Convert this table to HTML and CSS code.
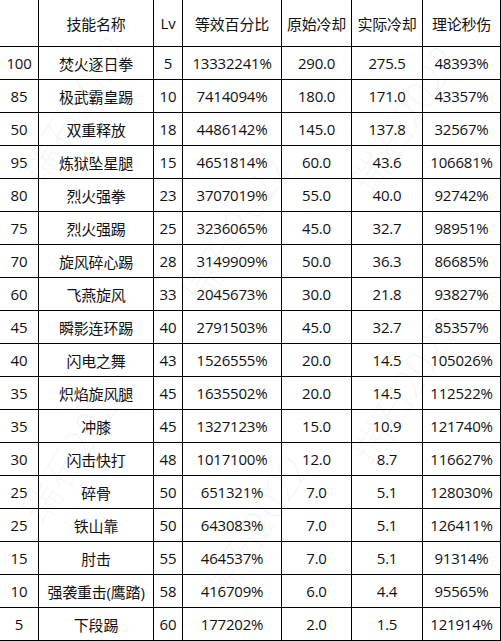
FILE: index.html
```html
<!DOCTYPE html>
<html lang="zh-CN">
<head>
<meta charset="utf-8">
<title>技能秒伤表</title>
<link rel="stylesheet" href="styles.css">
</head>
<body>
<div class="sheet">
  <div class="grid">
    <div class="cell head"></div><div class="cell head">技能名称</div><div class="cell head">Lv</div><div class="cell head">等效百分比</div><div class="cell head">原始冷却</div><div class="cell head">实际冷却</div><div class="cell head">理论秒伤</div>
    <div class="cell">100</div><div class="cell">焚火逐日拳</div><div class="cell">5</div><div class="cell">13332241%</div><div class="cell">290.0</div><div class="cell">275.5</div><div class="cell">48393%</div>
    <div class="cell">85</div><div class="cell">极武霸皇踢</div><div class="cell">10</div><div class="cell">7414094%</div><div class="cell">180.0</div><div class="cell">171.0</div><div class="cell">43357%</div>
    <div class="cell">50</div><div class="cell">双重释放</div><div class="cell">18</div><div class="cell">4486142%</div><div class="cell">145.0</div><div class="cell">137.8</div><div class="cell">32567%</div>
    <div class="cell">95</div><div class="cell">炼狱坠星腿</div><div class="cell">15</div><div class="cell">4651814%</div><div class="cell">60.0</div><div class="cell">43.6</div><div class="cell">106681%</div>
    <div class="cell">80</div><div class="cell">烈火强拳</div><div class="cell">23</div><div class="cell">3707019%</div><div class="cell">55.0</div><div class="cell">40.0</div><div class="cell">92742%</div>
    <div class="cell">75</div><div class="cell">烈火强踢</div><div class="cell">25</div><div class="cell">3236065%</div><div class="cell">45.0</div><div class="cell">32.7</div><div class="cell">98951%</div>
    <div class="cell">70</div><div class="cell">旋风碎心踢</div><div class="cell">28</div><div class="cell">3149909%</div><div class="cell">50.0</div><div class="cell">36.3</div><div class="cell">86685%</div>
    <div class="cell">60</div><div class="cell">飞燕旋风</div><div class="cell">33</div><div class="cell">2045673%</div><div class="cell">30.0</div><div class="cell">21.8</div><div class="cell">93827%</div>
    <div class="cell">45</div><div class="cell">瞬影连环踢</div><div class="cell">40</div><div class="cell">2791503%</div><div class="cell">45.0</div><div class="cell">32.7</div><div class="cell">85357%</div>
    <div class="cell">40</div><div class="cell">闪电之舞</div><div class="cell">43</div><div class="cell">1526555%</div><div class="cell">20.0</div><div class="cell">14.5</div><div class="cell">105026%</div>
    <div class="cell">35</div><div class="cell">炽焰旋风腿</div><div class="cell">45</div><div class="cell">1635502%</div><div class="cell">20.0</div><div class="cell">14.5</div><div class="cell">112522%</div>
    <div class="cell">35</div><div class="cell">冲膝</div><div class="cell">45</div><div class="cell">1327123%</div><div class="cell">15.0</div><div class="cell">10.9</div><div class="cell">121740%</div>
    <div class="cell">30</div><div class="cell">闪击快打</div><div class="cell">48</div><div class="cell">1017100%</div><div class="cell">12.0</div><div class="cell">8.7</div><div class="cell">116627%</div>
    <div class="cell">25</div><div class="cell">碎骨</div><div class="cell">50</div><div class="cell">651321%</div><div class="cell">7.0</div><div class="cell">5.1</div><div class="cell">128030%</div>
    <div class="cell">25</div><div class="cell">铁山靠</div><div class="cell">50</div><div class="cell">643083%</div><div class="cell">7.0</div><div class="cell">5.1</div><div class="cell">126411%</div>
    <div class="cell">15</div><div class="cell">肘击</div><div class="cell">55</div><div class="cell">464537%</div><div class="cell">7.0</div><div class="cell">5.1</div><div class="cell">91314%</div>
    <div class="cell">10</div><div class="cell">强袭重击(鹰踏)</div><div class="cell">58</div><div class="cell">416709%</div><div class="cell">6.0</div><div class="cell">4.4</div><div class="cell">95565%</div>
    <div class="cell">5</div><div class="cell">下段踢</div><div class="cell">60</div><div class="cell">177202%</div><div class="cell">2.0</div><div class="cell">1.5</div><div class="cell">121914%</div>
  </div>
  <div class="watermark">
    <span class="wm w1">瑞石2022</span>
    <span class="wm w2">瑞石2022</span>
    <span class="wm w3">瑞石2022</span>
    <span class="wm w4">瑞石2022</span>
    <span class="wm w5">瑞石2022</span>
    <span class="wm w6">瑞石2022</span>
  </div>
</div>
</body>
</html>
```
FILE: styles.css
```css
html, body {
  margin: 0;
  padding: 0;
  background: #fff;
}
body {
  width: 501px;
  height: 641px;
  overflow: hidden;
}
.sheet {
  position: relative;
  width: 501px;
  height: 641px;
}
.grid {
  display: grid;
  grid-template-columns: 38px 114px 28px 98px 69px 70px 77px;
  grid-template-rows: 46px repeat(18, 32px);
  gap: 1px;
  padding: 0 1px 1px 0;
  background: #000;
  width: max-content;
}
.cell {
  background: #fff;
  display: flex;
  align-items: center;
  justify-content: center;
  white-space: nowrap;
  font-family: "Open Sans", "Noto Sans CJK SC", sans-serif;
  font-size: 15px;
  letter-spacing: -0.2px;
  color: #111;
}
.watermark {
  position: absolute;
  inset: 0;
  pointer-events: none;
}
.wm {
  position: absolute;
  font-family: "Noto Sans CJK SC", sans-serif;
  font-size: 40px;
  font-weight: 300;
  color: rgba(0, 0, 0, 0.045);
  transform: rotate(-58deg);
  white-space: nowrap;
}
.w1 { left: -10px; top: 80px; }
.w2 { left: 150px; top: 200px; }
.w3 { left: 320px; top: 90px; }
.w4 { left: -10px; top: 420px; }
.w5 { left: 170px; top: 500px; }
.w6 { left: 320px; top: 360px; }
```
